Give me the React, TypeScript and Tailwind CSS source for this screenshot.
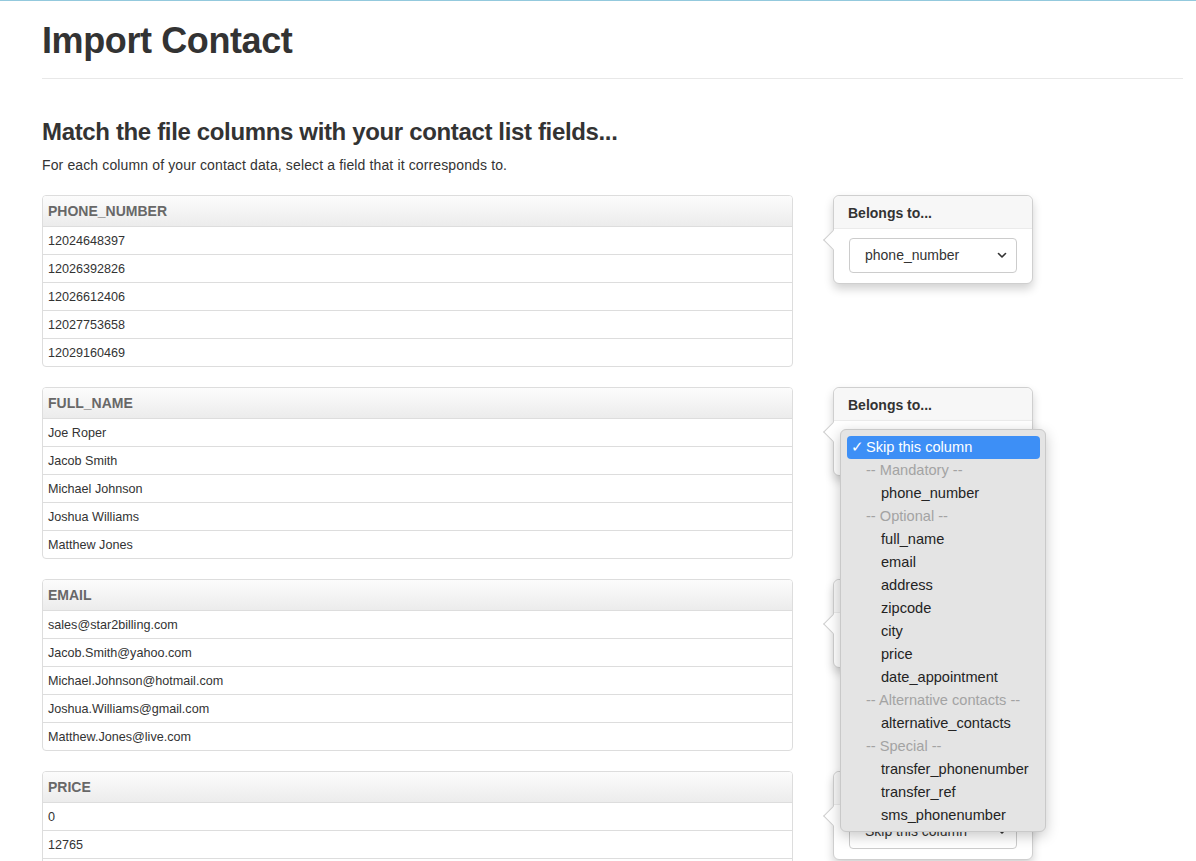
import React from 'react';

type Column = {
  name: string;
  values: string[];
  selected: string;
};

const columns: Column[] = [
  {
    name: 'PHONE_NUMBER',
    values: ['12024648397', '12026392826', '12026612406', '12027753658', '12029160469'],
    selected: 'phone_number',
  },
  {
    name: 'FULL_NAME',
    values: ['Joe Roper', 'Jacob Smith', 'Michael Johnson', 'Joshua Williams', 'Matthew Jones'],
    selected: 'Skip this column',
  },
  {
    name: 'EMAIL',
    values: [
      'sales@star2billing.com',
      'Jacob.Smith@yahoo.com',
      'Michael.Johnson@hotmail.com',
      'Joshua.Williams@gmail.com',
      'Matthew.Jones@live.com',
    ],
    selected: 'Skip this column',
  },
  {
    name: 'PRICE',
    values: ['0', '12765', '350', '1500', '99'],
    selected: 'Skip this column',
  },
];

// options of the open select, in order
const menuItems: { label: string; kind: 'checked' | 'group' | 'option' }[] = [
  { label: 'Skip this column', kind: 'checked' },
  { label: '-- Mandatory --', kind: 'group' },
  { label: 'phone_number', kind: 'option' },
  { label: '-- Optional --', kind: 'group' },
  { label: 'full_name', kind: 'option' },
  { label: 'email', kind: 'option' },
  { label: 'address', kind: 'option' },
  { label: 'zipcode', kind: 'option' },
  { label: 'city', kind: 'option' },
  { label: 'price', kind: 'option' },
  { label: 'date_appointment', kind: 'option' },
  { label: '-- Alternative contacts --', kind: 'group' },
  { label: 'alternative_contacts', kind: 'option' },
  { label: '-- Special --', kind: 'group' },
  { label: 'transfer_phonenumber', kind: 'option' },
  { label: 'transfer_ref', kind: 'option' },
  { label: 'sms_phonenumber', kind: 'option' },
];

const SelectMenu: React.FC = () => (
  <div className="absolute top-[41px] left-[6px] z-10 w-[206px] rounded-[6px] border border-[#c9c9c9] bg-[#e4e4e4] pt-[6px] pb-[4px] pl-[6px] pr-[5px] shadow-[0_4px_14px_rgba(0,0,0,0.22)]">
    {menuItems.map(item => {
      if (item.kind === 'checked') {
        return (
          <div key={item.label} className="flex h-[23px] items-center rounded-[4px] bg-[#3d8ff6] pl-[4px] text-[14.6px] text-white">
            <span className="w-[15px]">✓</span>
            <span>{item.label}</span>
          </div>
        );
      }
      if (item.kind === 'group') {
        return (
          <div key={item.label} className="flex h-[23px] items-center pl-[19px] text-[14.6px] text-[#a3a3a3]">
            {item.label}
          </div>
        );
      }
      return (
        <div key={item.label} className="flex h-[23px] items-center pl-[34px] text-[14.6px] text-[#232323]">
          {item.label}
        </div>
      );
    })}
  </div>
);

const Popover: React.FC<{ selected: string; open?: boolean }> = ({ selected, open }) => (
  <div className="relative w-[200px] self-start rounded-[6px] border border-[#cfcfcf] bg-white shadow-[0_5px_10px_rgba(0,0,0,0.18)]">
    {/* arrow */}
    <div className="absolute left-[-8px] top-[37px] h-[14px] w-[14px] rotate-45 border-b border-l border-[#cfcfcf] bg-white" />
    <div className="flex h-[33px] items-center rounded-t-[6px] border-b border-[#ebebeb] bg-[#f7f7f7] px-[14px] pt-[2px] text-[14px] font-bold text-[#333]">
      Belongs to...
    </div>
    <div className="relative px-[15px] pt-[9px] pb-[10px]">
      <div className="flex h-[35px] items-center justify-between rounded-[4px] border border-[#cccccc] bg-white pl-[15px] pr-[9px] text-[14px] text-[#333]">
        <span>{selected}</span>
        <svg width="10" height="7" viewBox="0 0 10 7" fill="none">
          <path d="M1.5 1.5l3.5 3.5 3.5-3.5" stroke="#333" strokeWidth="1.6" strokeLinecap="round" strokeLinejoin="round" />
        </svg>
      </div>
    </div>
    {open && <SelectMenu />}
  </div>
);

const ColumnTable: React.FC<{ column: Column }> = ({ column }) => (
  <div className="w-[751px] shrink-0 overflow-hidden rounded-[4px] border border-[#dddddd]">
    <div className="flex h-[30px] items-center bg-gradient-to-b from-[#fcfcfc] to-[#ececec] px-[5px] pt-[1px] text-[14px] font-bold text-[#686868]">
      {column.name}
    </div>
    {column.values.map((value, i) => (
      <div key={i} className="flex h-[28px] items-center border-t border-[#dddddd] px-[5px] pt-[1px] text-[12.6px] text-[#333]">
        {value}
      </div>
    ))}
  </div>
);

export default function App() {
  return (
    <div className="min-h-screen overflow-hidden border-t border-[#93c9dd] bg-white font-['Liberation_Sans',Arial,sans-serif] text-[#333]">
      <div className="pl-[42px] pr-[13px] pt-[20px]">
        {/* Header */}
        <div className="border-b border-[#e8e8e8] pb-[17px]">
          <h1 className="text-[36px] leading-[40px] font-bold tracking-[-0.4px] text-[#333]">Import Contact</h1>
        </div>

        <h2 className="mt-[38px] text-[24px] leading-[30px] font-bold tracking-[-0.35px] text-[#333]">
          Match the file columns with your contact list fields...
        </h2>
        <p className="mt-[8px] text-[14px] leading-[20px] tracking-[0.13px] text-[#333]">
          For each column of your contact data, select a field that it corresponds to.
        </p>

        {/* Column mapping */}
        <div className="mt-[20px] flex flex-col gap-[20px]">
          {columns.map((column, i) => (
            <div key={column.name} className="flex gap-[40px]">
              <ColumnTable column={column} />
              <Popover selected={column.selected} open={i === 1} />
            </div>
          ))}
        </div>
      </div>
    </div>
  );
}
